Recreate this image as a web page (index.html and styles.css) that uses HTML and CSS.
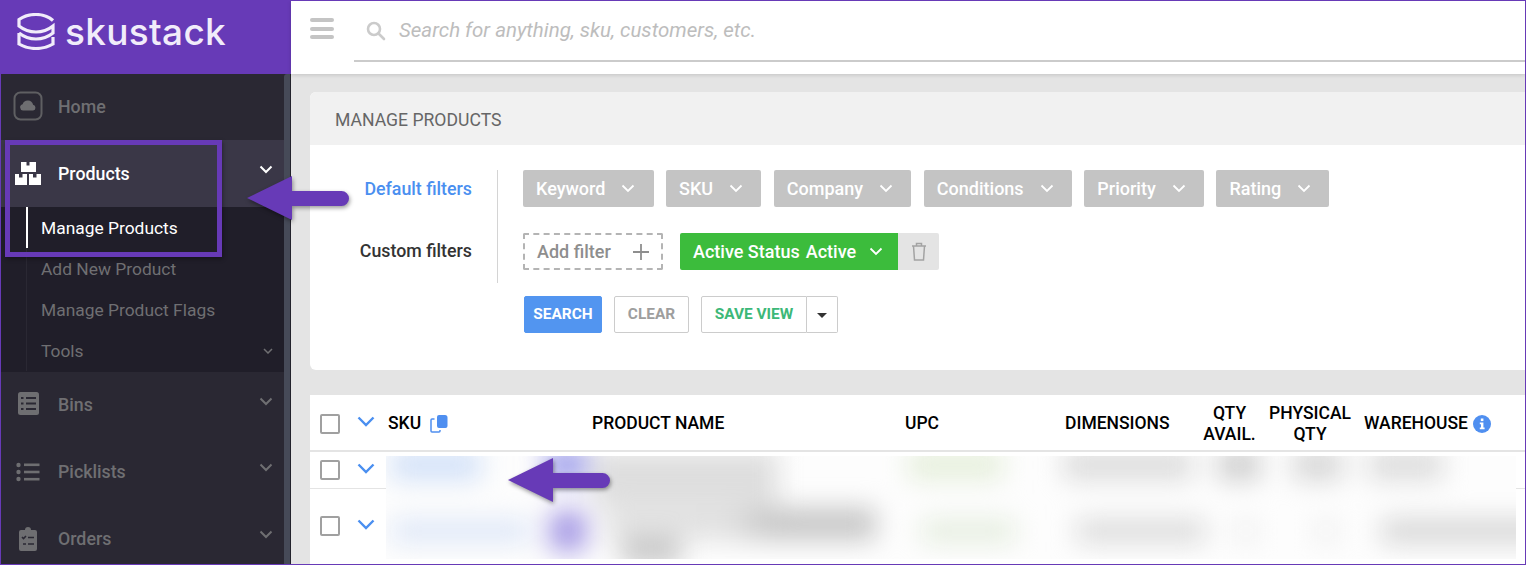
FILE: index.html
```html
<!DOCTYPE html>
<html lang="en">
<head>
  <meta charset="UTF-8">
  <title>Manage Products</title>
  <link rel="stylesheet" href="styles.css">
</head>
<body>
  <div class="app">
    <aside class="sidebar">
      <div class="brand">
        <svg class="brand-logo" viewBox="0 0 38 37" fill="none" stroke="#f1ecfa" stroke-width="3.200">
          <path d="M36 7.500 C31 3 25 1.500 19 1.500 C13 1.500 7 3 2 6.500 V13 C7 17 13 19 19 19 C25 19 31 17 36 13 V20 C31 24 25 26 19 26 C13 26 7 24 2 20"/>
          <path d="M2 20 V31 C7 34 13 35.500 19 35.500 C25 35.500 31 34 36 31 V24"/>
        </svg>
        <span class="brand-name">skustack</span>
      </div>
      <div class="side-body">
        <nav class="nav">
          <a class="nav-item short">
            <span class="nav-icon home-icon">
              <svg viewBox="0 0 30 30" width="30" height="30" fill="none"><rect x="1.500" y="1.500" width="27" height="27" rx="6" stroke="#5f5f62" stroke-width="2"/><path d="M10 19.500 a3.200 3.200 0 0 1 -.4 -6.300 a5.500 5.500 0 0 1 10.500 .6 a2.900 2.900 0 0 1 0 5.700 Z" fill="#6e6e71"/></svg>
            </span>
            <span class="nav-label">Home</span>
          </a>
          <a class="nav-item open">
            <span class="nav-icon">
              <svg viewBox="0 0 26 23" width="26" height="23" fill="#fff"><path d="M5 0h5.500v3.500h3V0H20v10H5Z" transform="translate(1 0)"/><path d="M0 12h4v3.500h3.500V12H12v11H0Z"/><path d="M14 12h4v3.500h3.500V12H26v11H14Z"/></svg>
            </span>
            <span class="nav-label">Products</span>
            <svg class="nav-chev" viewBox="0 0 14 9"><path d="M1.500 1.500 7 7l5.500-5.500"/></svg>
          </a>
          <div class="sub">
            <a class="sub-item current">Manage Products</a>
            <a class="sub-item">Add New Product</a>
            <a class="sub-item">Manage Product Flags</a>
            <a class="sub-item">Tools
              <svg class="sub-chev" viewBox="0 0 10 6"><path d="M1 1l4 4 4-4"/></svg>
            </a>
          </div>
          <a class="nav-item short">
            <span class="nav-icon">
              <svg viewBox="0 0 21 24" width="21" height="24"><rect width="21" height="23" rx="2.500" fill="#6e6e71"/><path d="M3 6h2.500M8 6h10M3 11.500h2.500M8 11.500h10M3 17h2.500M8 17h10" stroke="#2a2833" stroke-width="2"/></svg>
            </span>
            <span class="nav-label">Bins</span>
            <svg class="nav-chev" viewBox="0 0 14 9"><path d="M1.500 1.500 7 7l5.500-5.500"/></svg>
          </a>
          <a class="nav-item">
            <span class="nav-icon">
              <svg viewBox="0 0 24 20" width="24" height="20" fill="#6e6e71"><circle cx="2.500" cy="3" r="2.200"/><circle cx="2.500" cy="10" r="2.200"/><circle cx="2.500" cy="17" r="2.200"/><rect x="8" y="1.500" width="15.500" height="2.600"/><rect x="8" y="8.700" width="15.500" height="2.600"/><rect x="8" y="15.900" width="15.500" height="2.600"/></svg>
            </span>
            <span class="nav-label">Picklists</span>
            <svg class="nav-chev" viewBox="0 0 14 9"><path d="M1.500 1.500 7 7l5.500-5.500"/></svg>
          </a>
          <a class="nav-item">
            <span class="nav-icon">
              <svg viewBox="0 0 18 24" width="18" height="24"><path d="M2 3h4a3 3 0 0 1 6 0h4a2 2 0 0 1 2 2v17a2 2 0 0 1-2 2H2a2 2 0 0 1-2-2V5a2 2 0 0 1 2-2Z" fill="#6e6e71"/><path d="M3 10l1.500 1.500L7 9M9 10.500h6M4 17h3M9 17h6" stroke="#2a2833" stroke-width="1.600" fill="none"/></svg>
            </span>
            <span class="nav-label">Orders</span>
            <svg class="nav-chev" viewBox="0 0 14 9"><path d="M1.500 1.500 7 7l5.500-5.500"/></svg>
          </a>
        </nav>
        <div class="scroll"></div>
      </div>
    </aside>

    <main class="main">
      <header class="topbar">
        <div class="burger"><i></i><i></i><i></i></div>
        <div class="search">
          <svg viewBox="0 0 20 20" width="20" height="20" fill="none" stroke="#cbcbcb" stroke-width="2.600"><circle cx="8" cy="8" r="6"/><path d="M12.500 12.500 18 18" stroke-linecap="round"/></svg>
          <span class="search-text">Search for anything, sku, customers, etc.</span>
        </div>
      </header>

      <div class="content">
        <section class="card">
          <div class="card-head">MANAGE PRODUCTS</div>
          <div class="card-body">
            <div class="filters">
              <div class="filter-labels">
                <div class="filter-label default">Default filters</div>
                <div class="filter-label">Custom filters</div>
              </div>
              <div class="filter-rows">
                <div class="chips">
                  <span class="chip">Keyword <svg viewBox="0 0 14 9"><path d="M1.500 1.500 7 7l5.500-5.500"/></svg></span>
                  <span class="chip">SKU <svg viewBox="0 0 14 9"><path d="M1.500 1.500 7 7l5.500-5.500"/></svg></span>
                  <span class="chip">Company <svg viewBox="0 0 14 9"><path d="M1.500 1.500 7 7l5.500-5.500"/></svg></span>
                  <span class="chip">Conditions <svg viewBox="0 0 14 9"><path d="M1.500 1.500 7 7l5.500-5.500"/></svg></span>
                  <span class="chip">Priority <svg viewBox="0 0 14 9"><path d="M1.500 1.500 7 7l5.500-5.500"/></svg></span>
                  <span class="chip">Rating <svg viewBox="0 0 14 9"><path d="M1.500 1.500 7 7l5.500-5.500"/></svg></span>
                </div>
                <div class="chips custom">
                  <span class="add-filter">Add filter
                    <svg viewBox="0 0 16 16" width="16" height="16"><path d="M8 0v16M0 8h16" stroke="#8e8e8e" stroke-width="1.800"/></svg>
                  </span>
                  <span class="status"><b>Active Status</b><b>Active</b><svg viewBox="0 0 14 9"><path d="M1.500 1.500 7 7l5.500-5.500"/></svg></span>
                  <span class="trash">
                    <svg viewBox="0 0 16 19" width="16" height="19" fill="none" stroke="#a3a3a3" stroke-width="1.500"><path d="M1 4h14M5.500 4V1.500h5V4M2.500 4l1 14h9l1-14"/></svg>
                  </span>
                </div>
              </div>
            </div>
            <div class="actions">
              <button class="btn btn-search">SEARCH</button>
              <button class="btn btn-clear">CLEAR</button>
              <div class="btn-group">
                <button class="btn btn-save">SAVE VIEW</button>
                <button class="btn btn-caret"><i></i></button>
              </div>
            </div>
          </div>
        </section>

        <section class="table">
          <div class="thead">
            <span class="check"></span>
            <svg class="row-chev" viewBox="0 0 18 11"><path d="M1.500 1.500 9 9l7.500-7.500"/></svg>
            <span class="th sku">SKU
              <svg viewBox="0 0 18 19" width="18" height="19"><path d="M9 1h6a2.500 2.500 0 0 1 2.500 2.500V12a2 2 0 0 1-2 2H9a2 2 0 0 1-2-2V3a2 2 0 0 1 2-2Z" fill="#4f8ff0"/><path d="M4.500 5H2a1 1 0 0 0-1 1v11a1 1 0 0 0 1 1h7a1 1 0 0 0 1-1v-1" fill="none" stroke="#4f8ff0" stroke-width="1.500"/></svg>
            </span>
            <span class="th">PRODUCT NAME</span>
            <span class="th">UPC</span>
            <span class="th">DIMENSIONS</span>
            <span class="th center">QTY<br>AVAIL.</span>
            <span class="th center physical">PHYSICAL<br>QTY</span>
            <span class="th warehouse">WAREHOUSE
              <svg viewBox="0 0 18 18" width="18" height="18"><circle cx="9" cy="9" r="9" fill="#4f8ff0"/><rect x="7.800" y="3.500" width="2.600" height="2.600" fill="#fff"/><path d="M6.800 7.600h3.600v5h1.200v1.600H6.800v-1.600H8v-3.400H6.800Z" fill="#fff"/></svg>
            </span>
          </div>
          <div class="tbody">
            <div class="tbody-left">
              <div class="tr tr-short">
                <span class="check"></span>
                <svg class="row-chev" viewBox="0 0 18 11"><path d="M1.500 1.500 9 9l7.500-7.500"/></svg>
              </div>
              <div class="tr tr-tall">
                <span class="check"></span>
                <svg class="row-chev" viewBox="0 0 18 11"><path d="M1.500 1.500 9 9l7.500-7.500"/></svg>
              </div>
            </div>
            <!-- product rows are blurred out in the capture -->
            <div class="smudge">
              <div class="smudge-inner">
                <div class="smudge-row first">
                  <i class="blob sku-blob"></i><i class="blob thumb-blob"></i><i class="blob name-blob"></i><i class="blob upc-blob"></i><i class="blob dim-blob"></i><i class="blob qty-blob"></i><i class="blob phys-blob"></i><i class="blob ware-blob"></i>
                </div>
                <div class="smudge-row second">
                  <i class="blob sku-blob"></i><i class="blob thumb-blob"></i>
                  <div class="name-stack">
                    <i class="blob name-blob"></i>
                    <i class="blob name-tail"></i>
                  </div>
                  <i class="blob upc-blob"></i><i class="blob dim-blob"></i><i class="blob qty-blob"></i><i class="blob phys-blob"></i><i class="blob ware-blob"></i>
                </div>
              </div>
            </div>
            <div class="tbody-right"></div>
          </div>
        </section>
      </div>
    </main>

    <div class="highlight"></div>
    <svg class="arrow arrow-nav" viewBox="0 0 104 46"><path d="M0 23 45 1v15h49.500a7.500 7.500 0 0 1 0 15H45v14Z"/></svg>
    <svg class="arrow arrow-row" viewBox="0 0 104 46"><path d="M0 23 45 1v15h49.500a7.500 7.500 0 0 1 0 15H45v14Z"/></svg>
  </div>
</body>
</html>
```

FILE: styles.css
```css
* {
  box-sizing: border-box;
  margin: 0;
  padding: 0;
}

body {
  font-family: 'Roboto', 'Liberation Sans', sans-serif;
  background: #e4e4e4;
  overflow: hidden;
}

.app {
  position: relative;
  display: flex;
  width: 1526px;
  height: 565px;
  border: 1px solid #673ab7;
  overflow: hidden;
}

/* sidebar */
.sidebar {
  width: 290px;
  flex-shrink: 0;
  display: flex;
  flex-direction: column;
  background: #2a2833;
}

.brand {
  height: 73px;
  flex-shrink: 0;
  background: #673ab7;
  display: flex;
  align-items: center;
  padding: 0 0 12px 16px;
  gap: 10px;
}

.brand-logo {
  width: 38px;
  height: 37px;
  margin-top: -1px;
}

.brand-name {
  font-family: 'Inter', sans-serif;
  font-size: 37px;
  font-weight: 500;
  letter-spacing: 0.3px;
  color: #f1ecfa;
}

.side-body {
  flex: 1;
  display: flex;
  min-height: 0;
}

.nav {
  width: 283px;
  flex-shrink: 0;
}

.scroll {
  width: 7px;
  background: #464a58;
  border-right: 1px solid #23222c;
  border-radius: 3px 0 0 0;
}

.nav-item {
  height: 67px;
  display: flex;
  align-items: center;
  padding-left: 12px;
  position: relative;
  color: #6f6f72;
  font-size: 17.800px;
  font-weight: 500;
}

.nav-item.short {
  height: 66px;
  padding-bottom: 2px;
}

.nav-item.open {
  background: #3a3747;
  color: #fff;
}

.nav-icon {
  width: 30px;
  height: 30px;
  display: flex;
  align-items: center;
  justify-content: center;
  margin-right: 15px;
}

.nav-chev {
  position: absolute;
  right: 11px;
  top: 25px;
  width: 14px;
  height: 9px;
  fill: none;
  stroke: #6f6f72;
  stroke-width: 2;
}

.nav-item.open .nav-chev {
  stroke: #fff;
}

.sub {
  height: 165px;
  background: #201e29;
  padding-left: 25px;
}

.sub-item {
  height: 41px;
  display: flex;
  align-items: center;
  position: relative;
  padding-left: 14px;
  border-left: 1px solid #2a2833;
  color: #6f6f72;
  font-size: 17.400px;
}

.sub-item.current {
  color: #fff;
  border-left: 2px solid #fff;
  padding-left: 13px;
}

.sub-chev {
  position: absolute;
  right: 11px;
  top: 18px;
  width: 10px;
  height: 6px;
  fill: none;
  stroke: #6f6f72;
  stroke-width: 1.500;
}

/* main area */
.main {
  flex: 1;
  min-width: 0;
  display: flex;
  flex-direction: column;
}

.topbar {
  height: 73px;
  flex-shrink: 0;
  background: #fff;
  box-shadow: 0 1px 4px rgba(0, 0, 0, 0.15);
  display: flex;
  padding: 17px 0 12px 19px;
  position: relative;
}

.burger {
  width: 24px;
  height: 21px;
  display: flex;
  flex-direction: column;
  justify-content: space-between;
  margin-right: 20px;
}

.burger i {
  display: block;
  height: 4px;
  background: #c4c4c4;
  border-radius: 2px;
}

.search {
  flex: 1;
  display: flex;
  align-items: flex-start;
  gap: 13px;
  padding: 3px 0 0 12px;
  border-bottom: 2px solid #cbcbcb;
}

.search-text {
  font-size: 20.500px;
  font-style: italic;
  color: #bdbdbd;
  line-height: 20px;
  margin-top: -1px;
}

.content {
  flex: 1;
  min-height: 0;
  padding: 18px 0 0 19px;
}

.card {
  height: 278px;
  background: #fff;
  border-radius: 6px 0 0 6px;
  overflow: hidden;
}

.card-head {
  height: 53px;
  background: #f1f1f1;
  padding: 2px 0 0 25px;
  display: flex;
  align-items: center;
  font-size: 17.600px;
  color: #666;
}

.card-body {
  padding: 25px 0 0 0;
}

.filters {
  display: flex;
}

.filter-labels {
  width: 188px;
  height: 113px;
  border-right: 1px solid #d4d4d4;
  padding-right: 25px;
  text-align: right;
  font-size: 17.800px;
  font-weight: 500;
  color: #333;
}

.filter-label {
  height: 37px;
  line-height: 37px;
  margin-bottom: 25px;
}

.filter-label.default {
  color: #4a8ff0;
}

.filter-rows {
  padding-left: 25px;
}

.chips {
  display: flex;
  gap: 12.500px;
  height: 37px;
  margin-bottom: 26px;
}

.chips.custom {
  gap: 0;
  margin-bottom: 0;
}

.chip {
  height: 37px;
  padding: 0 18.200px 0 13px;
  background: #c4c4c4;
  border-radius: 2px;
  color: #fff;
  font-size: 18px;
  font-weight: 500;
  display: flex;
  align-items: center;
  gap: 16px;
}

.chip svg,
.status svg {
  width: 14px;
  height: 9px;
  fill: none;
  stroke: #fff;
  stroke-width: 1.800;
}

.add-filter {
  width: 140px;
  height: 37px;
  border: 2px dashed #b4b4b4;
  border-radius: 2px;
  color: #8e8e8e;
  font-size: 18px;
  font-weight: 500;
  padding: 0 12px;
  display: flex;
  align-items: center;
  justify-content: space-between;
  margin-right: 17px;
}

.status {
  width: 218px;
  height: 37px;
  background: #3cbc3c;
  border-radius: 2px 0 0 2px;
  color: #fff;
  padding: 0 13px;
  display: flex;
  align-items: center;
  font-size: 18px;
}

.status b {
  font-weight: 500;
  margin-right: 6px;
}

.status svg {
  margin-left: 7px;
}

.trash {
  width: 41px;
  height: 37px;
  background: #e4e4e4;
  border-radius: 0 2px 2px 0;
  display: flex;
  align-items: center;
  justify-content: center;
}

.actions {
  display: flex;
  padding: 13px 0 0 214px;
  gap: 12px;
}

.btn {
  height: 37px;
  padding-bottom: 2px;
  font-family: inherit;
  font-size: 15.400px;
  font-weight: 700;
  border-radius: 2px;
  border: 1px solid #ccc;
  background: #fff;
}

.btn-search {
  width: 78px;
  background: #5295f0;
  border-color: #5295f0;
  color: #fff;
}

.btn-clear {
  width: 75px;
  color: #9e9e9e;
}

.btn-group {
  display: flex;
}

.btn-save {
  width: 106px;
  color: #3cb878;
  border-radius: 2px 0 0 2px;
}

.btn-caret {
  width: 31px;
  border-left: none;
  border-radius: 0 2px 2px 0;
  display: flex;
  align-items: center;
  justify-content: center;
}

.btn-caret i {
  display: block;
  border-top: 5px solid #333;
  border-left: 5px solid transparent;
  border-right: 5px solid transparent;
  margin-top: 3px;
}

/* table */
.table {
  margin-top: 25px;
  background: #fff;
  height: 169px;
  overflow: hidden;
}

.thead {
  height: 57px;
  border-bottom: 2px solid #e4e4e4;
  display: grid;
  grid-template-columns: 37px 31px 204px 313px 160px 131px 67px 101px 1fr;
  align-items: center;
  padding: 2px 0 0 10px;
  font-size: 17.500px;
  font-weight: 500;
  color: #000;
}

.th {
  line-height: 21px;
  white-space: nowrap;
}

.th.center {
  text-align: center;
}

.th.physical {
  padding-right: 7px;
}

.th.sku,
.th.warehouse {
  display: flex;
  align-items: center;
  gap: 9px;
}

.th.warehouse {
  gap: 5px;
}

.check {
  display: block;
  width: 20px;
  height: 20px;
  border: 2px solid #a0a0a0;
  border-radius: 2px;
}

.row-chev {
  width: 18px;
  height: 11px;
  fill: none;
  stroke: #4a8ff0;
  stroke-width: 2.400;
  margin-bottom: 4px;
}

.tbody {
  display: flex;
  height: 112px;
}

.tbody-left {
  width: 76px;
  flex-shrink: 0;
}

.tr {
  display: flex;
  align-items: center;
  padding-left: 10px;
  gap: 17px;
}

.tr-short {
  height: 37px;
  border-bottom: 1px solid #e4e4e4;
}

.tr-tall {
  height: 74px;
}

.smudge {
  width: 1130px;
  height: 103px;
  margin-top: 4px;
  flex-shrink: 0;
  overflow: hidden;
  background: #fdfdfd;
}

.smudge-inner {
  height: 100%;
  filter: blur(13px);
}

.smudge-row {
  height: 50%;
  display: flex;
}

.blob {
  display: block;
  height: 30px;
  flex-shrink: 0;
  background: #d6d6d6;
}

.first .blob {
  margin-top: -6px;
}

.first .sku-blob { width: 90px; margin-left: 5px; background: #d2e1f8; }
.first .thumb-blob { width: 42px; margin-left: 64px; background: #9a9aea; }
.first .name-blob { width: 186px; margin-left: 5px; height: 56px; background: #dedede; }
.first .upc-blob { width: 95px; margin-left: 130px; background: #e6efdc; }
.first .dim-blob { width: 130px; margin-left: 60px; background: #dcdcdc; }
.first .qty-blob { width: 42px; margin-left: 25px; background: #cdcdcd; }
.first .phys-blob { width: 50px; margin-left: 33px; background: #d6d6d6; }
.first .ware-blob { width: 75px; margin-left: 25px; background: #dcdcdc; }

.second .sku-blob { width: 140px; height: 24px; margin: 11px 0 0 5px; background: #dfe8f8; }
.second .thumb-blob { width: 36px; height: 40px; margin: 3px 0 0 19px; background: #a498e4; }

.name-stack {
  width: 270px;
  flex-shrink: 0;
  margin-left: 20px;
}

.second .name-blob {
  width: 270px;
  height: 32px;
  background: linear-gradient(to right, #e2e2e2, #e0e0e0 45%, #c6c6c6 60%, #c6c6c6 95%);
}

.second .name-tail {
  width: 60px;
  height: 24px;
  margin-left: 15px;
  background: #c4c4c4;
}

.second .upc-blob { width: 95px; height: 24px; margin: 11px 0 0 45px; background: #e6eee0; }
.second .dim-blob { width: 130px; height: 24px; margin: 11px 0 0 60px; background: #dcdcdc; }
.second .qty-blob { width: 20px; height: 24px; margin: 11px 0 0 30px; background: #efefef; }
.second .phys-blob { width: 20px; height: 24px; margin: 11px 0 0 60px; background: #efefef; }
.second .ware-blob { width: 170px; height: 24px; margin: 11px 0 0 45px; background: #d6d6d6; }

.tbody-right {
  flex: 1;
  height: 37px;
  border-bottom: 1px solid #e4e4e4;
}

/* annotation overlays */
.highlight {
  position: absolute;
  left: 4px;
  top: 139px;
  width: 217px;
  height: 117px;
  border: 5px solid #673ab7;
  box-shadow: 1px 2px 4px rgba(0, 0, 0, 0.35);
}

.arrow {
  position: absolute;
  width: 104px;
  height: 46px;
  fill: #673ab7;
  filter: drop-shadow(1px 2px 2px rgba(0, 0, 0, 0.4));
}

.arrow-nav {
  left: 246px;
  top: 174px;
}

.arrow-row {
  left: 507px;
  top: 456px;
}
```
